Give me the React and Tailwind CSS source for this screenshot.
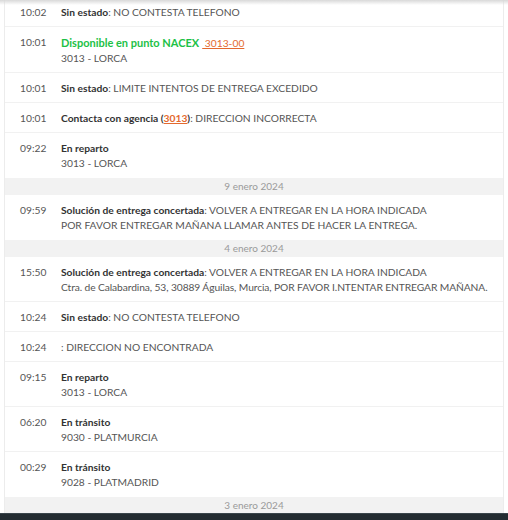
import React from "react";

const B = ({ children }) => <span className="font-bold text-[#333]">{children}</span>;

function Row({ time, children, last }) {
  return (
    <div className={"flex pl-[15px] pt-[8px] " + (last ? "pb-[7px]" : "pb-[6px] border-b border-[#f1f1f1]")}>
      <div className="w-[41px] shrink-0 text-[#555]">{time}</div>
      <div className="flex-1 text-[#555]">{children}</div>
    </div>
  );
}

function DateBand({ children }) {
  return (
    <div className="h-[17px] bg-[#f2f2f2] flex items-center justify-center text-[10px] text-[#9a9a9a]">
      {children}
    </div>
  );
}

export default function App() {
  return (
    <div
      className="relative w-[508px] h-[520px] overflow-hidden bg-white flex flex-col text-[10.25px] leading-[15px]"
      style={{ fontFamily: "Lato, 'Open Sans', sans-serif" }}
    >
      <div className="flex-1 overflow-hidden">
        <div className="mx-[4px] border-x border-[#ececec] -mt-[3px]">
          <Row time="10:02">
            <B>Sin estado</B>: NO CONTESTA TELEFONO
          </Row>
          <Row time="10:01">
            <div>
              <span className="font-bold text-[11px] text-[#1cc146]">Disponible en punto NACEX</span>
              <span className="ml-[3px] text-[#e4692e] underline">{"\u00a03013-00"}</span>
            </div>
            <div>3013 - LORCA</div>
          </Row>
          <Row time="10:01">
            <B>Sin estado</B>: LIMITE INTENTOS DE ENTREGA EXCEDIDO
          </Row>
          <Row time="10:01">
            <B>
              Contacta con agencia (<span className="text-[#e4692e] underline">3013</span>)
            </B>
            : DIRECCION INCORRECTA
          </Row>
          <Row time="09:22" last>
            <div>
              <B>En reparto</B>
            </div>
            <div>3013 - LORCA</div>
          </Row>
          <DateBand>9 enero 2024</DateBand>
          <Row time="09:59" last>
            <div>
              <B>Solución de entrega concertada</B>: VOLVER A ENTREGAR EN LA HORA INDICADA
            </div>
            <div>POR FAVOR ENTREGAR MAÑANA LLAMAR ANTES DE HACER LA ENTREGA.</div>
          </Row>
          <DateBand>4 enero 2024</DateBand>
          <Row time="15:50">
            <div>
              <B>Solución de entrega concertada</B>: VOLVER A ENTREGAR EN LA HORA INDICADA
            </div>
            <div className="whitespace-nowrap tracking-[-0.1px]">Ctra. de Calabardina, 53, 30889 Águilas, Murcia, POR FAVOR I.NTENTAR ENTREGAR MAÑANA.</div>
          </Row>
          <Row time="10:24">
            <B>Sin estado</B>: NO CONTESTA TELEFONO
          </Row>
          <Row time="10:24">: DIRECCION NO ENCONTRADA</Row>
          <Row time="09:15">
            <div>
              <B>En reparto</B>
            </div>
            <div>3013 - LORCA</div>
          </Row>
          <Row time="06:20">
            <div>
              <B>En tránsito</B>
            </div>
            <div>9030 - PLATMURCIA</div>
          </Row>
          <Row time="00:29" last>
            <div>
              <B>En tránsito</B>
            </div>
            <div>9028 - PLATMADRID</div>
          </Row>
          <DateBand>3 enero 2024</DateBand>
        </div>
      </div>
      <div className="h-[7px] shrink-0 bg-[#232c31] border-t border-[#3a454b]" />
      <div className="absolute top-0 left-0 right-0 h-[5px] bg-gradient-to-b from-[#d9d9d9] to-transparent pointer-events-none" />
    </div>
  );
}
